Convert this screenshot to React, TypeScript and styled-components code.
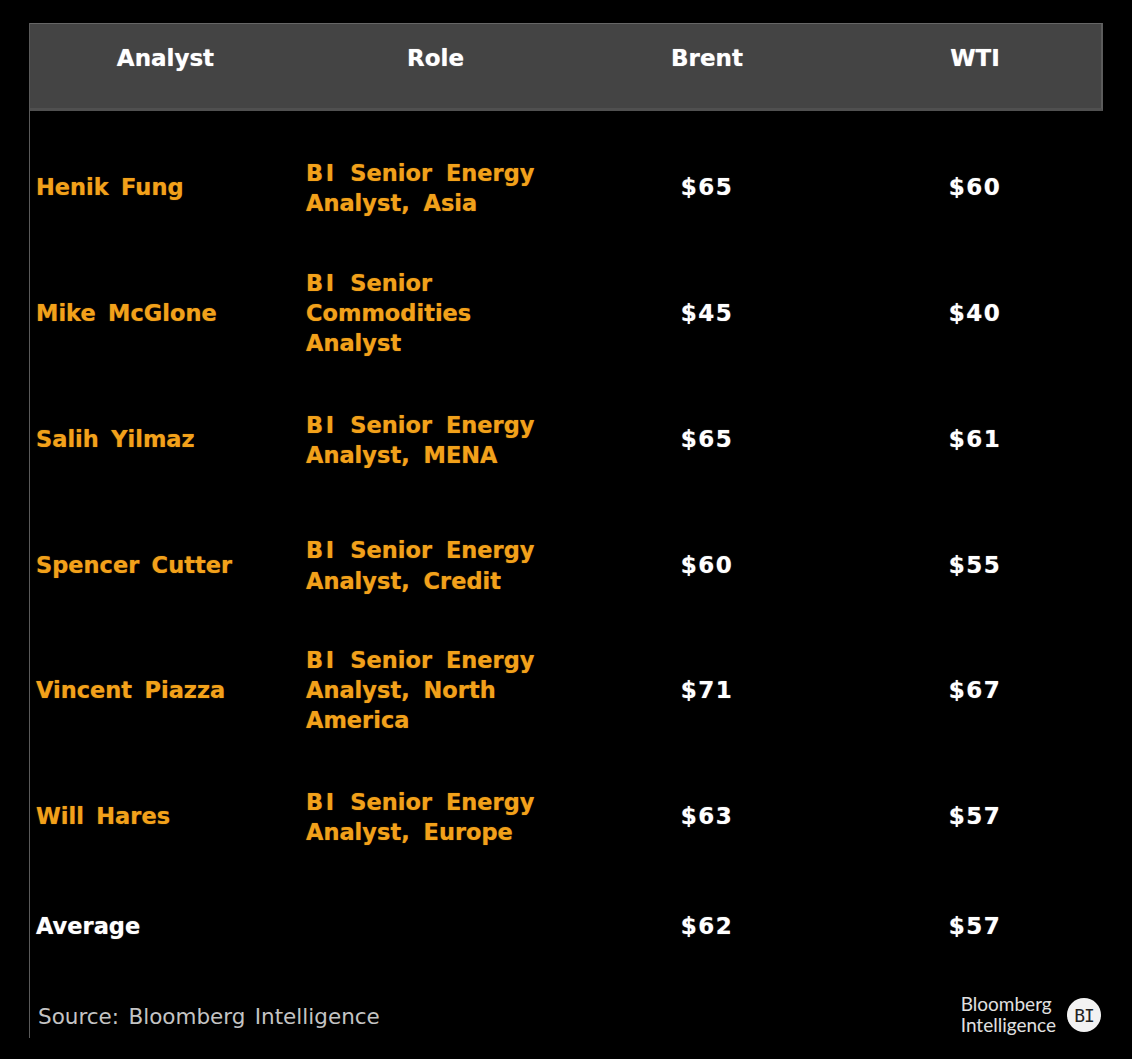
import { type FC } from 'react'
import styled, { createGlobalStyle } from 'styled-components'

const GlobalStyle = createGlobalStyle`
  html, body {
    background: #000;
    margin: 0;
    padding: 0;
  }

  body {
    font-family: "DejaVu Sans", Verdana, sans-serif;
  }
`

const Page = styled.div`
  background: #000;
  height: 1059px;
  overflow: hidden;
  padding: 23px 29px 0;
  width: 1132px;
  box-sizing: border-box;
`

const Panel = styled.div`
  border-left: 1px solid #5a5a5a;
  box-sizing: border-box;
  height: 1015px;
  width: 1074px;
`

const columns = '271px 269px 274px 259px'

const HeaderRow = styled.div`
  background: #444;
  border-bottom: 3px solid #505050;
  border-right: 2px solid #5c5c5c;
  border-top: 1px solid #666;
  box-sizing: border-box;
  display: grid;
  grid-template-columns: ${columns};
  height: 88px;
  margin-bottom: 13px;
`

const HeaderCell = styled.div<{ $shift?: number }>`
  color: #fff;
  font-size: 23px;
  font-weight: 700;
  line-height: 30px;
  padding-left: ${({ $shift }) => $shift ?? 0}px;
  padding-top: 19px;
  text-align: center;
  text-shadow: 0 0 1px rgba(255, 255, 255, 0.6);
`

const Row = styled.div<{ $height: number }>`
  align-items: center;
  display: grid;
  grid-template-columns: ${columns};
  height: ${({ $height }) => $height}px;
`

const NameCell = styled.div<{ $total?: boolean }>`
  color: ${({ $total }) => ($total ? '#fff' : '#f2a11a')};
  font-size: 22.5px;
  font-weight: 700;
  line-height: 30px;
  padding-left: 6px;
  text-shadow: 0 0 1px ${({ $total }) => ($total ? 'rgba(255, 255, 255, 0.6)' : 'rgba(242, 161, 26, 0.6)')};
  white-space: nowrap;
  word-spacing: 4.5px;
`

const RoleCell = styled.div<{ $lines?: number }>`
  color: #f2a11a;
  font-size: 22.5px;
  font-weight: 700;
  line-height: 30.3px;
  padding-left: 5px;
  padding-top: ${({ $lines }) => ($lines === 2 ? 2 : 0)}px;
  text-shadow: 0 0 1px rgba(242, 161, 26, 0.6);
  word-spacing: 6px;
`

const RoleLine = styled.div`
  white-space: nowrap;
`

const Initials = styled.span`
  letter-spacing: 2.5px;
`

const ValueCell = styled.div<{ $shift?: number }>`
  color: #fff;
  font-size: 23px;
  font-weight: 700;
  letter-spacing: 1.5px;
  line-height: 30px;
  padding-left: ${({ $shift }) => $shift ?? 0}px;
  text-align: center;
  text-shadow: 0 0 1px rgba(255, 255, 255, 0.6);
`

const Footer = styled.div`
  align-items: center;
  display: flex;
  justify-content: space-between;
  padding: 25px 2px 0 8px;
`

const Source = styled.div`
  color: #c4c4c4;
  font-size: 21.5px;
  line-height: 28px;
  word-spacing: 2.5px;
`

const Brand = styled.div`
  align-items: center;
  column-gap: 11px;
  display: flex;
  margin-top: -3px;
`

const BrandText = styled.div`
  color: #e0e0e0;
  font-family: "Lato", "Open Sans", sans-serif;
  font-size: 19px;
  line-height: 21px;
  margin-top: -2px;
`

const BrandBadge = styled.div`
  align-items: center;
  background: #f2f2f2;
  border-radius: 50%;
  color: #222;
  display: flex;
  font-family: "DejaVu Sans Mono", monospace;
  font-size: 18px;
  height: 34px;
  justify-content: center;
  letter-spacing: -1px;
  width: 34px;
`

type Analyst = {
  name: string
  role: string[]
  brent: string
  wti: string
  height: number
}

const analysts: Analyst[] = [
  { name: 'Henik Fung', role: ['BI Senior Energy', 'Analyst, Asia'], brent: '$65', wti: '$60', height: 126 },
  { name: 'Mike McGlone', role: ['BI Senior', 'Commodities', 'Analyst'], brent: '$45', wti: '$40', height: 126 },
  { name: 'Salih Yilmaz', role: ['BI Senior Energy', 'Analyst, MENA'], brent: '$65', wti: '$61', height: 126 },
  { name: 'Spencer Cutter', role: ['BI Senior Energy', 'Analyst, Credit'], brent: '$60', wti: '$55', height: 125 },
  { name: 'Vincent Piazza', role: ['BI Senior Energy', 'Analyst, North', 'America'], brent: '$71', wti: '$67', height: 126 },
  { name: 'Will Hares', role: ['BI Senior Energy', 'Analyst, Europe'], brent: '$63', wti: '$57', height: 126 },
]

const App: FC = () => (
  <Page>
    <GlobalStyle />
    <Panel>
      <HeaderRow>
        <HeaderCell>Analyst</HeaderCell>
        <HeaderCell>Role</HeaderCell>
        <HeaderCell>Brent</HeaderCell>
        <HeaderCell $shift={3}>WTI</HeaderCell>
      </HeaderRow>
      {analysts.map((analyst) => (
        <Row key={analyst.name} $height={analyst.height}>
          <NameCell>{analyst.name}</NameCell>
          <RoleCell $lines={analyst.role.length}>
            {analyst.role.map((line) => (
              <RoleLine key={line}>
                {line.startsWith('BI ') ? (
                  <>
                    <Initials>BI</Initials>
                    {line.slice(2)}
                  </>
                ) : (
                  line
                )}
              </RoleLine>
            ))}
          </RoleCell>
          <ValueCell>{analyst.brent}</ValueCell>
          <ValueCell $shift={3}>{analyst.wti}</ValueCell>
        </Row>
      ))}
      <Row $height={94}>
        <NameCell $total>Average</NameCell>
        <RoleCell />
        <ValueCell>$62</ValueCell>
        <ValueCell $shift={3}>$57</ValueCell>
      </Row>
      <Footer>
        <Source>Source: Bloomberg Intelligence</Source>
        <Brand>
          <BrandText>
            Bloomberg
            <br />
            Intelligence
          </BrandText>
          <BrandBadge>BI</BrandBadge>
        </Brand>
      </Footer>
    </Panel>
  </Page>
)

export default App
